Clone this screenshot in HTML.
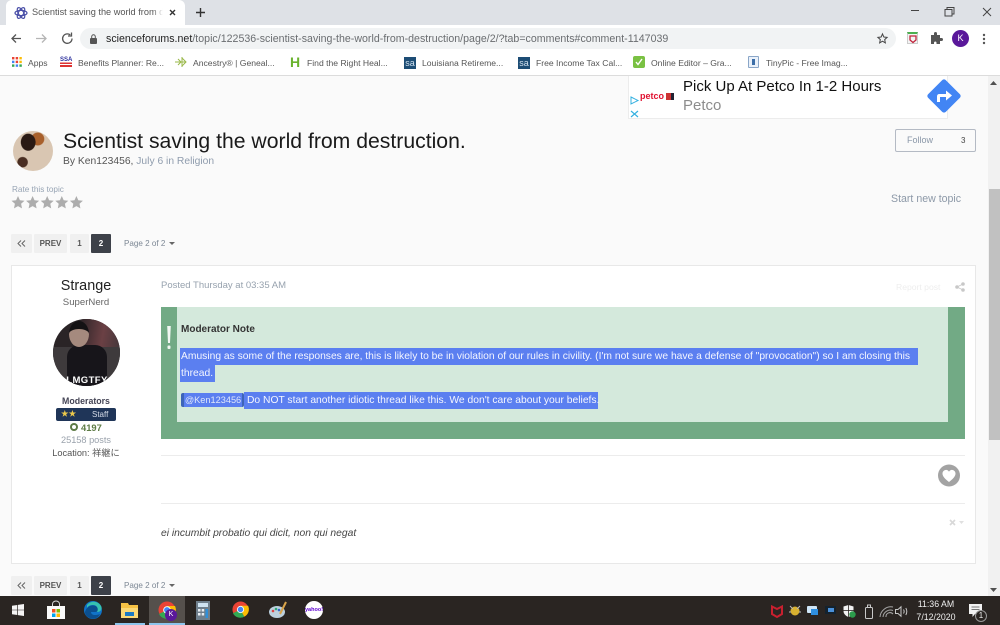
<!DOCTYPE html>
<html><head><meta charset="utf-8"><style>
html,body{margin:0;padding:0}
body{width:1000px;height:625px;overflow:hidden;position:relative;background:#fafafa;font-family:"Liberation Sans","Noto Sans CJK JP",sans-serif;filter:blur(.3px)}
.a{position:absolute;white-space:nowrap}
.bm{font-size:8.6px;color:#555;top:58px;line-height:10px}
.pg{position:absolute;height:19px;line-height:19px;background:#f0f0f0;color:#555;font-size:8px;font-weight:bold;text-align:center;border-radius:1px}
.sel{background:#5b7ff0;color:#f4f6ff;position:absolute;white-space:nowrap;font-size:10.3px;line-height:17px;height:17px}
svg{position:absolute;overflow:visible}
</style></head><body>

<!-- chrome -->
<div class="a" style="left:0;top:0;width:1000px;height:25px;background:#dee1e6"></div>
<div class="a" style="left:6px;top:0;width:179px;height:25px;background:#fff;border-radius:6px 6px 0 0"></div>
<svg style="left:14px;top:6px" width="14" height="14" viewBox="0 0 14 14" fill="none" stroke="#4a4fa8" stroke-width="1.2"><ellipse cx="7" cy="7" rx="6" ry="2.6"/><ellipse cx="7" cy="7" rx="6" ry="2.6" transform="rotate(60 7 7)"/><ellipse cx="7" cy="7" rx="6" ry="2.6" transform="rotate(120 7 7)"/></svg>
<div class="a" style="left:32px;top:7px;width:131px;overflow:hidden;font-size:9.2px;line-height:11px;color:#555">Scientist saving the world from d</div>
<div class="a" style="left:153px;top:6px;width:10px;height:13px;background:linear-gradient(90deg,rgba(255,255,255,0),#fff)"></div>
<svg style="left:168px;top:8px" width="9" height="9" viewBox="0 0 9 9" stroke="#333" stroke-width="1.4"><path d="M2 2L7 7M7 2L2 7"/></svg>
<svg style="left:195px;top:7px" width="11" height="11" viewBox="0 0 11 11" stroke="#333" stroke-width="1.4"><path d="M5.5 1V10M1 5.5H10"/></svg>
<svg style="left:911px;top:7px" width="80" height="10" viewBox="0 0 80 10" fill="none" stroke="#444" stroke-width="1"><path d="M0 3.5H8"/><path d="M34 2.5H41V9H34ZM36 2.5V0.5H43V7H41"/><path d="M72 1L80 9M80 1L72 9"/></svg>

<div class="a" style="left:0;top:25px;width:1000px;height:25px;background:#fff"></div>
<svg style="left:10px;top:32px" width="62" height="13" viewBox="0 0 62 13" fill="none" stroke-width="1.3"><path d="M11 6.5H2M6 2.5L2 6.5L6 10.5" stroke="#555"/><path d="M26 6.5H36M32 2.5L36 6.5L32 10.5" stroke="#b5b5b5"/><path d="M62 6.5A4.7 4.7 0 1 1 60.3 3" stroke="#555"/><path d="M61.5 0.5V4H58" stroke="#555"/></svg>
<div class="a" style="left:80px;top:28px;width:816px;height:21px;background:#f1f3f4;border-radius:11px"></div>
<svg style="left:89px;top:34px" width="9" height="10" viewBox="0 0 9 10"><rect x="1" y="4" width="7" height="6" rx="1" fill="#555"/><path d="M2.7 4V2.6A1.8 1.8 0 0 1 6.3 2.6V4" fill="none" stroke="#555"/></svg>
<div class="a" style="left:106px;top:33px;font-size:10.6px;line-height:12px;color:#6a6d70;letter-spacing:.02px"><span style="color:#222">scienceforums.net</span>/topic/122536-scientist-saving-the-world-from-destruction/page/2/?tab=comments#comment-1147039</div>
<svg style="left:877px;top:33px" width="11" height="11" viewBox="0 0 12 12" fill="none" stroke="#444" stroke-width="1.1"><path d="M6 1L7.5 4.4L11 4.8L8.4 7.2L9.1 10.8L6 9L2.9 10.8L3.6 7.2L1 4.8L4.5 4.4Z"/></svg>
<div class="a" style="left:907px;top:32px;width:11px;height:12px;background:#f4f4f4;border:1px solid #ccc;border-top:2px solid #4caf50;box-sizing:border-box"></div>
<svg style="left:909px;top:35px" width="8" height="8" viewBox="0 0 8 8"><path d="M1 1H7V5L4 7.5L1 5Z" fill="none" stroke="#c0223b" stroke-width="1.3"/></svg>
<svg style="left:930px;top:32px" width="12" height="12" viewBox="0 0 12 12"><path d="M1 3H4V1.5A1.4 1.4 0 0 1 7 1.5V3H10V6H11.5A1.4 1.4 0 0 1 11.5 9H10V12H6.5V10.5A1.3 1.3 0 0 0 4 10.5V12H1Z" fill="#555"/></svg>
<div class="a" style="left:952px;top:30px;width:17px;height:17px;border-radius:50%;background:#5a189a;color:#fff;font-size:9px;line-height:17px;text-align:center">K</div>
<svg style="left:982px;top:33px" width="4" height="12" viewBox="0 0 4 12" fill="#555"><circle cx="2" cy="2" r="1.2"/><circle cx="2" cy="6" r="1.2"/><circle cx="2" cy="10" r="1.2"/></svg>

<div class="a" style="left:0;top:50px;width:1000px;height:25px;background:#fff;border-bottom:1px solid #dcdcdc;box-sizing:content-box"></div>
<svg style="left:12px;top:57px" width="10" height="10" viewBox="0 0 10 10"><g><rect width="2.4" height="2.4" fill="#ea4335"/><rect x="3.7" width="2.4" height="2.4" fill="#ea4335"/><rect x="7.4" width="2.4" height="2.4" fill="#fbbc05"/><rect y="3.7" width="2.4" height="2.4" fill="#4285f4"/><rect x="3.7" y="3.7" width="2.4" height="2.4" fill="#ea4335"/><rect x="7.4" y="3.7" width="2.4" height="2.4" fill="#fbbc05"/><rect y="7.4" width="2.4" height="2.4" fill="#34a853"/><rect x="3.7" y="7.4" width="2.4" height="2.4" fill="#4285f4"/><rect x="7.4" y="7.4" width="2.4" height="2.4" fill="#34a853"/></g></svg>
<div class="a bm" style="left:28px">Apps</div>
<div class="a" style="left:60px;top:57px;width:12px;height:10px;background:linear-gradient(#fff 0 55%,#d33 55% 70%,#fff 70% 80%,#d33 80%);color:#2b2f9c;font-size:6px;font-weight:bold;line-height:6px">SSA</div>
<div class="a bm" style="left:78px">Benefits Planner: Re...</div>
<svg style="left:175px;top:56px" width="12" height="12" viewBox="0 0 12 12" fill="none" stroke="#9ab84a" stroke-width="1"><path d="M0 6H11M3 3L6 6L3 9M7 1V11M7 2L11 6L7 10"/></svg>
<div class="a bm" style="left:193px">Ancestry® | Geneal...</div>
<div class="a" style="left:290px;top:55px;font-size:14px;line-height:14px;font-weight:bold;color:#6ab32e">H</div>
<div class="a bm" style="left:307px">Find the Right Heal...</div>
<div class="a" style="left:404px;top:57px;width:12px;height:12px;background:#1d4d75;color:#cfe0ee;font-size:9px;line-height:12px;text-align:center">sa</div>
<div class="a bm" style="left:422px">Louisiana Retireme...</div>
<div class="a" style="left:518px;top:57px;width:12px;height:12px;background:#1d4d75;color:#cfe0ee;font-size:9px;line-height:12px;text-align:center">sa</div>
<div class="a bm" style="left:536px">Free Income Tax Cal...</div>
<div class="a" style="left:633px;top:56px;width:12px;height:12px;background:#7ac143;border-radius:2px"></div>
<svg style="left:635px;top:58px" width="8" height="8" viewBox="0 0 8 8" fill="none" stroke="#fff" stroke-width="1.4"><path d="M1 4L3 6.5L7 1"/></svg>
<div class="a bm" style="left:651px">Online Editor – Gra...</div>
<div class="a" style="left:748px;top:56px;width:11px;height:12px;background:#eaf1fa;border:1px solid #8aa6c8;box-sizing:border-box;border-radius:1px"></div>
<div class="a" style="left:752px;top:59px;width:3px;height:6px;background:#3c6ea8"></div>
<div class="a bm" style="left:766px">TinyPic - Free Imag...</div>

<!-- ad -->
<div class="a" style="left:628px;top:76px;width:320px;height:43px;background:#fff;border:1px solid #ececec;border-top:0;box-sizing:border-box"></div>
<svg style="left:630px;top:96px" width="9" height="22" viewBox="0 0 9 22" fill="none" stroke="#33b0e0" stroke-width="1"><path d="M1 1L8 4.5L1 8Z"/><path d="M1 15L8 21M8 15L1 21" stroke-width="1.2"/></svg>
<div class="a" style="left:640px;top:91px;font-size:9px;line-height:11px;font-weight:bold;color:#e0102f">petco</div>
<div class="a" style="left:666px;top:93px;width:8px;height:7px;background:#c33;border-right:3px solid #223;box-sizing:border-box"></div>
<div class="a" style="left:683px;top:78px;font-size:15px;line-height:18px;color:#111">Pick Up At Petco In 1-2 Hours</div>
<div class="a" style="left:683px;top:97px;font-size:15px;line-height:18px;color:#8c8c8c">Petco</div>
<svg style="left:926px;top:78px" width="36" height="36" viewBox="0 0 36 36"><rect x="5.5" y="5.5" width="25" height="25" rx="2.5" transform="rotate(45 18 18)" fill="#4285f4"/><path d="M11 24V18.5Q11 16 13.5 16H20V12.5L26 17.5L20 22.5V19H14V24Z" fill="#fff"/></svg>

<!-- scrollbar -->
<div class="a" style="left:988px;top:76px;width:12px;height:520px;background:#f1f1f1"></div>
<div class="a" style="left:989px;top:189px;width:11px;height:251px;background:#c1c1c1"></div>
<svg style="left:990px;top:81px" width="7" height="5" viewBox="0 0 7 5" fill="#505050"><path d="M0 4L3.5 0L7 4Z"/></svg>
<svg style="left:990px;top:588px" width="7" height="5" viewBox="0 0 7 5" fill="#505050"><path d="M0 0L3.5 4L7 0Z"/></svg>

<!-- topic header -->
<div class="a" style="left:13px;top:131px;width:40px;height:40px;border-radius:50%;background:radial-gradient(ellipse at 38% 28%,#2a1a14 0 20%,transparent 22%),radial-gradient(circle at 62% 20%,#a8602c 0 15%,transparent 17%),radial-gradient(circle at 24% 78%,#4a2e22 0 11%,transparent 13%),#d9c6b2"></div>
<div class="a" style="left:63px;top:128px;font-size:21.2px;line-height:28px;color:#1a1a1a">Scientist saving the world from destruction.</div>
<div class="a" style="left:63px;top:155px;font-size:10.3px;line-height:13px;color:#555">By Ken123456, <span style="color:#8f9cad">July 6 in Religion</span></div>
<div class="a" style="left:895px;top:129px;width:81px;height:23px;border:1px solid #b4bac4;border-radius:2px;box-sizing:border-box;background:#fafafa"></div>
<div class="a" style="left:907px;top:134px;font-size:9px;line-height:12px;color:#8a97a8">Follow</div>
<div class="a" style="left:961px;top:135px;font-size:8px;line-height:12px;color:#444">3</div>
<div class="a" style="left:12px;top:184px;font-size:8.2px;line-height:11px;color:#97a4b4">Rate this topic</div>
<svg style="left:11px;top:195px" width="74" height="15" viewBox="0 0 74 15" fill="#adadad"><path d="M7 1L8.9 5.2L13.5 5.7L10.1 8.8L11 13.4L7 11.1L3 13.4L3.9 8.8L0.5 5.7L5.1 5.2Z"/><path transform="translate(14.6 0)" d="M7 1L8.9 5.2L13.5 5.7L10.1 8.8L11 13.4L7 11.1L3 13.4L3.9 8.8L0.5 5.7L5.1 5.2Z"/><path transform="translate(29.2 0)" d="M7 1L8.9 5.2L13.5 5.7L10.1 8.8L11 13.4L7 11.1L3 13.4L3.9 8.8L0.5 5.7L5.1 5.2Z"/><path transform="translate(43.8 0)" d="M7 1L8.9 5.2L13.5 5.7L10.1 8.8L11 13.4L7 11.1L3 13.4L3.9 8.8L0.5 5.7L5.1 5.2Z"/><path transform="translate(58.4 0)" d="M7 1L8.9 5.2L13.5 5.7L10.1 8.8L11 13.4L7 11.1L3 13.4L3.9 8.8L0.5 5.7L5.1 5.2Z"/></svg>
<div class="a" style="left:891px;top:192px;font-size:10.6px;line-height:14px;color:#8d99a8">Start new topic</div>

<!-- pagination top -->
<div class="pg" style="left:11px;top:234px;width:21px">
<svg style="left:6px;top:6px" width="9" height="7" viewBox="0 0 9 7" fill="none" stroke="#666" stroke-width="1"><path d="M4 0.5L1 3.5L4 6.5M8 0.5L5 3.5L8 6.5"/></svg></div>
<div class="pg" style="left:34px;top:234px;width:33px">PREV</div>
<div class="pg" style="left:70px;top:234px;width:19px">1</div>
<div class="pg" style="left:91px;top:234px;width:20px;background:#3d4149;color:#fff">2</div>
<div class="a" style="left:124px;top:238px;font-size:8.1px;line-height:11px;color:#7c8794">Page 2 of 2</div>
<svg style="left:169px;top:242px" width="6" height="3" viewBox="0 0 6 3" fill="#666"><path d="M0 0H6L3 3Z"/></svg>

<!-- post card -->
<div class="a" style="left:11px;top:265px;width:965px;height:299px;background:#fff;border:1px solid #e8e8e8;box-sizing:border-box"></div>
<div class="a" style="left:11px;top:277px;width:150px;text-align:center;font-size:14.4px;line-height:18px;color:#222">Strange</div>
<div class="a" style="left:11px;top:297px;width:150px;text-align:center;font-size:9.6px;line-height:12px;color:#666">SuperNerd</div>
<div class="a" style="left:53px;top:319px;width:67px;height:67px;border-radius:50%;overflow:hidden;background:#2a2426">
  <div class="a" style="left:28px;top:0;width:39px;height:32px;background:linear-gradient(100deg,#2e2528,#6b4044 55%,#43363a)"></div>
  <div class="a" style="left:0;top:28px;width:67px;height:39px;background:#3e3a3c"></div>
  <div class="a" style="left:14px;top:26px;width:40px;height:41px;background:#17151a;border-radius:12px 12px 0 0"></div>
  <div class="a" style="left:16px;top:2px;width:20px;height:26px;background:#a58a7e;border-radius:50%;border-top:8px solid #141214;box-sizing:border-box"></div>
  <div class="a" style="left:9px;top:56px;width:50px;text-align:center;font-size:9.5px;line-height:11px;font-weight:bold;color:#fff;letter-spacing:.4px">LMGTFY</div>
</div>
<div class="a" style="left:11px;top:395px;width:150px;text-align:center;font-size:8.8px;line-height:12px;font-weight:bold;color:#445">Moderators</div>
<div class="a" style="left:56px;top:408px;width:60px;height:13px;background:#1f3558;border-radius:2px"></div>
<div class="a" style="left:61px;top:408px;font-size:7.6px;line-height:12px;color:#ecc94b">★★</div>
<div class="a" style="left:92px;top:409px;font-size:8px;line-height:12px;color:#d5dce8">Staff</div>
<div class="a" style="left:69.5px;top:423px;width:8px;height:8px;border-radius:50%;background:#5d7b45"></div>
<div class="a" style="left:71.5px;top:425px;width:4px;height:4px;background:#fff;border-radius:50%"></div>
<div class="a" style="left:81px;top:422px;font-size:9.4px;line-height:11px;font-weight:bold;color:#5d7b45">4197</div>
<div class="a" style="left:11px;top:434px;width:150px;text-align:center;font-size:9.2px;line-height:12px;color:#9aa2ac">25158 posts</div>
<div class="a" style="left:11px;top:447px;width:150px;text-align:center;font-size:9.2px;line-height:12px;color:#555">Location: 祥継に</div>

<div class="a" style="left:161px;top:280px;font-size:9.5px;line-height:12px;color:#97a2ae">Posted Thursday at 03:35 AM</div>
<div class="a" style="left:896px;top:281px;font-size:8.6px;line-height:12px;color:#eeeeee">Report post</div>
<svg style="left:955px;top:282px" width="10" height="10" viewBox="0 0 10 10" fill="#c8c8c8" stroke="#c8c8c8" stroke-width=".8"><circle cx="8" cy="2" r="1.4"/><circle cx="2" cy="5" r="1.4"/><circle cx="8" cy="8" r="1.4"/><path d="M8 2L2 5L8 8" fill="none"/></svg>

<!-- moderator note -->
<div class="a" style="left:161px;top:307px;width:804px;height:132px;background:#72aa85"></div>
<div class="a" style="left:177px;top:307px;width:771px;height:115px;background:#d4e9dc"></div>
<svg style="left:165px;top:326px" width="8" height="25" viewBox="0 0 8 25" fill="#f2f7f3"><path d="M2.2 0H5.8L5 17H3Z"/><rect x="2.5" y="19.5" width="3" height="3.5" rx="1"/></svg>
<div class="a" style="left:181px;top:323px;font-size:10px;line-height:13px;font-weight:bold;color:#333">Moderator Note</div>
<div class="sel" style="left:180px;top:348px;width:738px;padding-left:1px;box-sizing:border-box">Amusing as some of the responses are, this is likely to be in violation of our rules in civility. (I'm not sure we have a defense of "provocation") so I am closing this</div>
<div class="sel" style="left:180px;top:365px;width:35px;padding-left:1px;box-sizing:border-box">thread.</div>
<div class="a" style="left:181px;top:393px;width:63px;height:14px;background:#3e64b8;border-radius:2px"></div>
<div class="a" style="left:184px;top:393px;width:58px;height:14px;line-height:14px;font-size:9.2px;color:#dfe7fb;background:#5b7ff0;text-align:center">@Ken123456</div>
<div class="sel" style="left:244px;top:392px;width:354px;padding-left:3px;box-sizing:border-box">Do NOT start another idiotic thread like this. We don't care about your beliefs.</div>

<!-- rest of post -->
<div class="a" style="left:161px;top:455px;width:804px;height:1px;background:#ececec"></div>
<svg style="left:938px;top:464px" width="22" height="23" viewBox="0 0 22 23"><circle cx="11" cy="11.5" r="11" fill="#a3a3a3"/><path d="M11 18C5 13.5 4.5 11 4.5 9.5C4.5 7 7 5.5 8.8 6C10 6.3 10.7 7 11 7.8C11.3 7 12 6.3 13.2 6C15 5.5 17.5 7 17.5 9.5C17.5 11 17 13.5 11 18Z" fill="#fff"/></svg>
<div class="a" style="left:161px;top:503px;width:804px;height:1px;background:#ececec"></div>
<svg style="left:949px;top:519px" width="16" height="7" viewBox="0 0 16 7" fill="none"><path d="M1 1L6 6M6 1L1 6" stroke="#d8d8d8" stroke-width="1.6"/><path d="M10 2H15L12.5 5Z" fill="#e0e0e0"/></svg>
<div class="a" style="left:161px;top:527px;font-size:10.3px;line-height:13px;font-style:italic;color:#444">ei incumbit probatio qui dicit, non qui negat</div>

<!-- pagination bottom -->
<div class="pg" style="left:11px;top:576px;width:21px">
<svg style="left:6px;top:6px" width="9" height="7" viewBox="0 0 9 7" fill="none" stroke="#666" stroke-width="1"><path d="M4 0.5L1 3.5L4 6.5M8 0.5L5 3.5L8 6.5"/></svg></div>
<div class="pg" style="left:34px;top:576px;width:33px">PREV</div>
<div class="pg" style="left:70px;top:576px;width:19px">1</div>
<div class="pg" style="left:91px;top:576px;width:20px;background:#3d4149;color:#fff">2</div>
<div class="a" style="left:124px;top:580px;font-size:8.1px;line-height:11px;color:#7c8794">Page 2 of 2</div>
<svg style="left:169px;top:584px" width="6" height="3" viewBox="0 0 6 3" fill="#666"><path d="M0 0H6L3 3Z"/></svg>

<!-- taskbar -->
<div class="a" style="left:0;top:596px;width:1000px;height:29px;background:#2a2522"></div>
<div class="a" style="left:149px;top:596px;width:36px;height:29px;background:#55504c"></div>
<div class="a" style="left:115px;top:623px;width:30px;height:2px;background:#8cc4ec"></div>
<div class="a" style="left:149px;top:623px;width:36px;height:2px;background:#8cc4ec"></div>
<svg style="left:12px;top:604px" width="12" height="12" viewBox="0 0 12 12" fill="#f4f4f4"><path d="M0 1.7L5.3 1V5.7H0ZM6 0.9L12 0V5.7H6ZM0 6.3H5.3V11L0 10.3ZM6 6.3H12V12L6 11.1Z"/></svg>
<svg style="left:47px;top:601px" width="18" height="18" viewBox="0 0 18 18"><path d="M0 5H18V18H0Z" fill="#fafafa"/><path d="M5.5 5V3A3.5 3 0 0 1 12.5 3V5" fill="none" stroke="#ddd"/><rect x="5" y="8" width="3.5" height="3.5" fill="#f25022"/><rect x="9.5" y="8" width="3.5" height="3.5" fill="#7fba00"/><rect x="5" y="12.5" width="3.5" height="3.5" fill="#00a4ef"/><rect x="9.5" y="12.5" width="3.5" height="3.5" fill="#ffb900"/></svg>
<svg style="left:84px;top:601px" width="18" height="18" viewBox="0 0 18 18"><circle cx="9" cy="9" r="9" fill="#1173c8"/><path d="M1 11C3 4 10 3 13 6C15 8 14 11 11 11H7C7 14 11 15 16 13C14 18 8 19 4 16C2 15 1 13 1 11Z" fill="#0b4f8f"/><path d="M3 4C7 -1 15 0 17.5 6C18 10 15 11 13 11C15 8 13 4 9 4C6 4 4 5 3 7Z" fill="#35c1b0"/></svg>
<svg style="left:121px;top:603px" width="17" height="15" viewBox="0 0 17 15"><path d="M0 0H7L8 2H17V15H0Z" fill="#f6c244"/><path d="M0 5H17V15H0Z" fill="#fbd976"/><rect x="4" y="9" width="9" height="4" fill="#1b7ac4"/></svg>
<svg style="left:158px;top:601px" width="18" height="18" viewBox="0 0 18 18"><circle cx="9" cy="9" r="8.5" fill="#ea4335"/><path d="M9 9L1 13A8.5 8.5 0 0 0 13 16.5Z" fill="#34a853"/><path d="M9 9L13 16.5A8.5 8.5 0 0 0 17 5H9Z" fill="#fbbc05"/><circle cx="9" cy="9" r="3.8" fill="#fff"/><circle cx="9" cy="9" r="2.9" fill="#4285f4"/></svg>
<div class="a" style="left:165px;top:609px;width:12px;height:12px;border-radius:50%;background:#5a189a;color:#fff;font-size:7px;line-height:12px;text-align:center">K</div>
<svg style="left:196px;top:601px" width="14" height="19" viewBox="0 0 14 19"><rect width="14" height="19" fill="#6f7f8c"/><rect x="2" y="2" width="10" height="4" fill="#cfe3f2"/><g fill="#e8eef3"><rect x="2" y="8" width="2.5" height="2.5"/><rect x="5.7" y="8" width="2.5" height="2.5"/><rect x="2" y="12" width="2.5" height="2.5"/><rect x="5.7" y="12" width="2.5" height="2.5"/></g><rect x="9.5" y="8" width="2.5" height="9" fill="#2f8fd8"/></svg>
<svg style="left:232px;top:601px" width="17" height="17" viewBox="0 0 18 18"><circle cx="9" cy="9" r="8.5" fill="#ea4335"/><path d="M9 9L1 13A8.5 8.5 0 0 0 13 16.5Z" fill="#34a853"/><path d="M9 9L13 16.5A8.5 8.5 0 0 0 17 5H9Z" fill="#fbbc05"/><circle cx="9" cy="9" r="3.8" fill="#fff"/><circle cx="9" cy="9" r="2.9" fill="#4285f4"/></svg>
<svg style="left:269px;top:601px" width="18" height="18" viewBox="0 0 18 18"><ellipse cx="8" cy="11" rx="8" ry="6" fill="#bcd0de"/><circle cx="4" cy="10" r="1.3" fill="#d44"/><circle cx="7" cy="8" r="1.3" fill="#3a7"/><circle cx="10" cy="9" r="1.3" fill="#36c"/><path d="M11 13L17 1" stroke="#d9a44a" stroke-width="2"/></svg>
<div class="a" style="left:305px;top:601px;width:18px;height:18px;border-radius:50%;background:#fff;color:#5f01d1;font-size:5.5px;line-height:18px;font-weight:bold;text-align:center">yahoo!</div>

<svg style="left:771px;top:605px" width="12" height="13" viewBox="0 0 12 13" fill="none" stroke="#c8202f" stroke-width="2"><path d="M1 1.5L6 4L11 1.5V9L6 12L1 9Z"/></svg>
<svg style="left:789px;top:604px" width="12" height="13" viewBox="0 0 12 13"><circle cx="6" cy="7" r="4.5" fill="#d8b030"/><path d="M1 2L4 5M11 2L8 5M0 8H2M10 8H12" stroke="#bbb"/></svg>
<div class="a" style="left:807px;top:606px;width:10px;height:7px;background:#cfe6f8;border-radius:1px"></div>
<div class="a" style="left:811px;top:609px;width:7px;height:6px;background:#2f8fe0"></div>
<div class="a" style="left:825px;top:606px;width:11px;height:8px;background:#14222e"></div>
<div class="a" style="left:828px;top:608px;width:6px;height:4px;background:#4a90d9"></div>
<svg style="left:843px;top:605px" width="13" height="13" viewBox="0 0 13 13"><path d="M5.5 0L10.5 1.5V6C10.5 9 8 11 5.5 12C3 11 .5 9 .5 6V1.5Z" fill="#f2f2f2"/><path d="M5.5 0V12" stroke="#2a2522" stroke-width=".8"/><path d="M.5 5.5H10.5" stroke="#2a2522" stroke-width=".8"/><circle cx="9.5" cy="9.5" r="3.2" fill="#2c9c4c"/></svg>
<svg style="left:864px;top:604px" width="10" height="15" viewBox="0 0 10 15" fill="none" stroke="#c8c8c8"><rect x="1.5" y="3.5" width="7" height="11" rx="1"/><path d="M3.5 3.5V1H6.5V3.5"/></svg>
<svg style="left:879px;top:605px" width="15" height="13" viewBox="0 0 15 13" fill="none" stroke="#a8a8a8" stroke-width="1"><path d="M1 12A11 11 0 0 1 14 2M4 12A7.5 7.5 0 0 1 14 5.5M7 12A4 4 0 0 1 14 9"/></svg>
<svg style="left:895px;top:606px" width="13" height="11" viewBox="0 0 13 11" fill="none" stroke="#c8c8c8"><path d="M.5 3.5H3L6 .8V10.2L3 7.5H.5Z"/><path d="M8.5 3.5Q9.8 5.5 8.5 7.5M10.8 2Q12.8 5.5 10.8 9"/></svg>
<div class="a" style="left:912px;top:598px;width:48px;text-align:center;font-size:8.8px;line-height:12px;color:#eee">11:36 AM</div>
<div class="a" style="left:912px;top:611px;width:48px;text-align:center;font-size:8.8px;line-height:12px;color:#eee">7/12/2020</div>
<svg style="left:969px;top:604px" width="14" height="13" viewBox="0 0 14 13"><path d="M0 0H13V10H6L3.5 13V10H0Z" fill="#f2f2f2"/><path d="M2.5 3H10.5M2.5 5.5H10.5" stroke="#777"/></svg>
<div class="a" style="left:975px;top:610px;width:12px;height:12px;border-radius:50%;background:#2a2522;border:1px solid #999;box-sizing:border-box;color:#eee;font-size:8px;line-height:10px;text-align:center">1</div>
</body></html>
